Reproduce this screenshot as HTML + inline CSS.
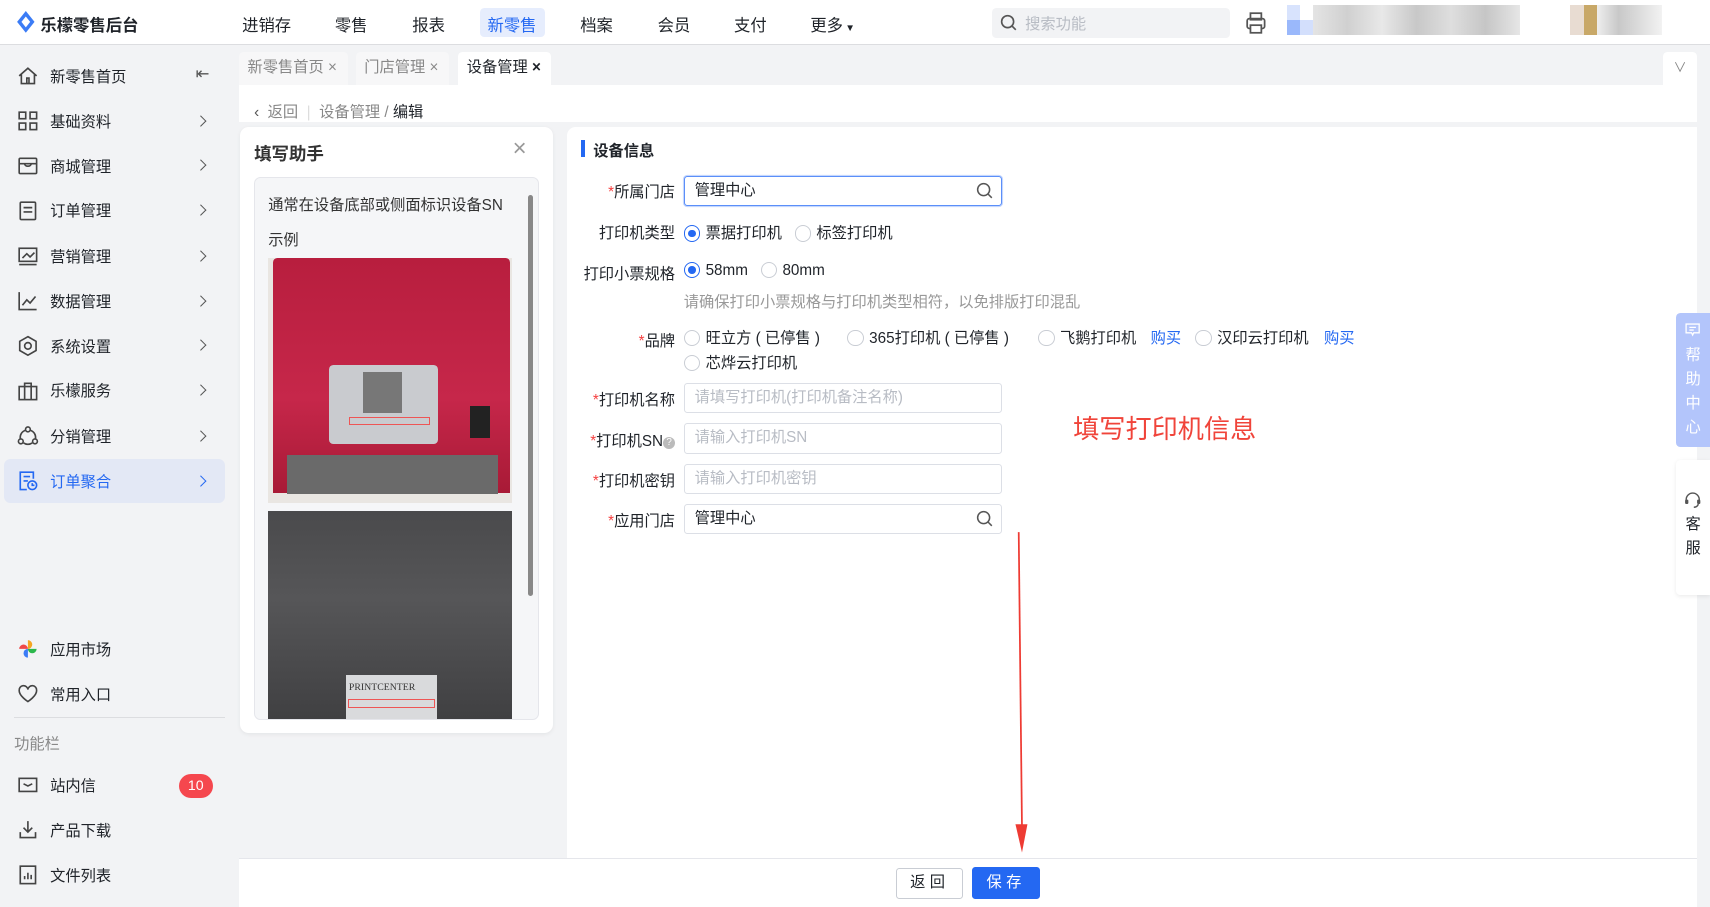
<!DOCTYPE html>
<html><head><meta charset="utf-8"><style>
*{box-sizing:border-box;margin:0;padding:0}
html,body{width:1710px;height:907px;overflow:hidden;background:#f2f3f5}
#w{zoom:1.0906;width:1568px;height:832px;position:relative;font-family:"Liberation Sans","Noto Sans CJK SC",sans-serif;font-size:14px;color:#1f2329;background:#f2f3f5}
.a{position:absolute}
.hdr{left:0;top:0;width:1568px;height:41px;background:#fff;border-bottom:1px solid #dcdde0}
.nav{top:11px;font-size:15px;color:#1f2329}
.mi{left:16px;width:190px;height:40px;display:flex;align-items:center;font-size:14px;color:#1f2329;border-radius:6px}
.mi svg{width:20px;height:20px;margin-right:10px;flex:none}
.mi .ch{position:absolute;right:18px;top:16px;width:7px;height:7px;border-right:1.5px solid #555;border-top:1.5px solid #555;transform:rotate(45deg)}
.tab{top:48px;height:30px;background:#f7f7f8;border-radius:4px 4px 0 0;color:#888;font-size:14px;line-height:30px;padding-left:8px}
.lbl{width:100px;text-align:right;left:519px;font-size:14px}
.lbl i{color:#f53f3f;font-style:normal}
.inp{left:627px;width:292px;height:28px;border:1px solid #dcdfe6;border-radius:3px;background:#fff;padding-left:9px;line-height:26px;font-size:14px}
.ph{color:#b8bcc4}
.rd{display:inline-block;width:15px;height:15px;border:1px solid #c9cdd4;border-radius:50%;vertical-align:-3px;margin-right:5px;background:#fff;position:relative}
.rd.on{border-color:#2468f2}
.rd.on:after{content:"";position:absolute;left:3px;top:3px;width:7px;height:7px;border-radius:50%;background:#2468f2}
.row{left:627px;font-size:14px;white-space:nowrap}
.blue{color:#2468f2}
</style></head><body><div id="w">

<div class="a hdr"></div>
<svg class="a" style="left:15px;top:10px" width="18" height="20" viewBox="0 0 18 20"><path d="M9 0 L17 10 L9 20 L1 10Z" fill="#3b7cf6"/><path d="M9 5 L13 10 L9 15 L5 10Z" fill="#fff"/></svg>
<div class="a" style="left:37px;top:11px;font-size:15px;font-weight:bold;color:#1f2329">乐檬零售后台</div>
<div class="a nav" style="left:222px">进销存</div>
<div class="a nav" style="left:307px">零售</div>
<div class="a nav" style="left:378px">报表</div>
<div class="a" style="left:440px;top:7px;width:60px;height:27px;background:#e6edfd;border-radius:4px"></div>
<div class="a nav" style="left:447px;color:#2468f2">新零售</div>
<div class="a nav" style="left:532px">档案</div>
<div class="a nav" style="left:603px">会员</div>
<div class="a nav" style="left:673px">支付</div>
<div class="a nav" style="left:743px">更多<span style="font-size:9px;margin-left:2px">▼</span></div>
<div class="a" style="left:910px;top:7px;width:218px;height:28px;background:#f2f3f5;border-radius:4px"></div>
<svg class="a" style="left:917px;top:13px" width="16" height="16" viewBox="0 0 16 16"><circle cx="7" cy="7" r="5.5" fill="none" stroke="#555" stroke-width="1.5"/><path d="M11 11l3.5 3.5" stroke="#555" stroke-width="1.5"/></svg>
<div class="a" style="left:940px;top:11px;color:#b8bcc4;font-size:14px">搜索功能</div>
<svg class="a" style="left:1142px;top:10px" width="20" height="22" viewBox="0 0 20 22"><rect x="5" y="2" width="10" height="6" fill="none" stroke="#555" stroke-width="1.6"/><rect x="2" y="7" width="16" height="9" rx="2" fill="none" stroke="#555" stroke-width="1.6"/><rect x="5" y="13" width="10" height="7" fill="#fff" stroke="#555" stroke-width="1.6"/></svg>
<div class="a" style="left:1180px;top:5px;width:12px;height:13px;background:#d8e3fd"></div>
<div class="a" style="left:1180px;top:18px;width:12px;height:14px;background:#9ab8fb"></div>
<div class="a" style="left:1192px;top:18px;width:12px;height:14px;background:#d3dffc"></div>
<div class="a" style="left:1204px;top:5px;width:190px;height:27px;background:linear-gradient(90deg,#e4e4e4,#d0d0d0,#e8e8e8,#c8c8c8,#dedede,#c6c6c6,#e6e6e6)"></div>
<div class="a" style="left:1440px;top:5px;width:12px;height:27px;background:#e8dcd2"></div>
<div class="a" style="left:1452px;top:5px;width:12px;height:27px;background:#c8a868"></div>
<div class="a" style="left:1464px;top:5px;width:60px;height:27px;background:linear-gradient(90deg,#eee,#c8c8c8,#ddd,#f2f2f2)"></div>

<!-- sidebar -->
<div class="a" style="left:4px;top:421px;width:202px;height:40px;background:#e3e8f5;border-radius:6px"></div>
<div class="a mi" style="top:50px"><svg viewBox="0 0 20 20"><path d="M2 10L10 3l8 7M4 8.5V17h12V8.5M9 17v-5h2v5" fill="none" stroke="#444" stroke-width="1.5"/></svg>新零售首页<span class="a" style="right:14px;top:9px;font-size:15px;color:#555">⇤</span></div>
<div class="a mi" style="top:91px"><svg viewBox="0 0 20 20"><g fill="none" stroke="#444" stroke-width="1.5"><rect x="2" y="2" width="6" height="6"/><rect x="12" y="2" width="6" height="6"/><rect x="2" y="12" width="6" height="6"/><rect x="12" y="12" width="6" height="6"/></g></svg>基础资料<span class="ch"></span></div>
<div class="a mi" style="top:132px"><svg viewBox="0 0 20 20"><g fill="none" stroke="#444" stroke-width="1.5"><rect x="2" y="3" width="16" height="14" rx="1"/><path d="M2 8h16M7 8c0 3 6 3 6 0"/></g></svg>商城管理<span class="ch"></span></div>
<div class="a mi" style="top:173px"><svg viewBox="0 0 20 20"><g fill="none" stroke="#444" stroke-width="1.5"><rect x="3" y="2" width="14" height="16" rx="1"/><path d="M6 7h8M6 11h8"/></g></svg>订单管理<span class="ch"></span></div>
<div class="a mi" style="top:215px"><svg viewBox="0 0 20 20"><g fill="none" stroke="#444" stroke-width="1.5"><rect x="2" y="3" width="16" height="12"/><path d="M5 12l4-4 3 3 4-4M2 18h16"/></g></svg>营销管理<span class="ch"></span></div>
<div class="a mi" style="top:256px"><svg viewBox="0 0 20 20"><g fill="none" stroke="#444" stroke-width="1.5"><path d="M2 2v16h16M5 14l4-5 3 3 5-6"/></g></svg>数据管理<span class="ch"></span></div>
<div class="a mi" style="top:297px"><svg viewBox="0 0 20 20"><g fill="none" stroke="#444" stroke-width="1.5"><path d="M10 1.5l7.5 4.3v8.4L10 18.5l-7.5-4.3V5.8z"/><circle cx="10" cy="10" r="3"/></g></svg>系统设置<span class="ch"></span></div>
<div class="a mi" style="top:338px"><svg viewBox="0 0 20 20"><g fill="none" stroke="#444" stroke-width="1.5"><rect x="2" y="6" width="16" height="12"/><path d="M7 6V3h6v3M7 6v12M13 6v12"/></g></svg>乐檬服务<span class="ch"></span></div>
<div class="a mi" style="top:380px"><svg viewBox="0 0 20 20"><g fill="none" stroke="#444" stroke-width="1.5"><circle cx="10" cy="4" r="2.2"/><circle cx="3.5" cy="15" r="2.2"/><circle cx="16.5" cy="15" r="2.2"/><path d="M7.8 4.8A7 7 0 0 0 3 12.5M12.2 4.8A7 7 0 0 1 17 12.5M6 16.5a7 7 0 0 0 8 0"/></g></svg>分销管理<span class="ch"></span></div>
<div class="a mi" style="top:421px;color:#2468f2"><svg viewBox="0 0 20 20"><g fill="none" stroke="#2468f2" stroke-width="1.5"><path d="M15 8V2H3v16h6M6 6h6M6 10h4"/><circle cx="14" cy="14" r="4"/><path d="M14 12v2h2"/></g></svg>订单聚合<span class="ch" style="border-color:#2468f2"></span></div>

<div class="a mi" style="top:575px"><svg viewBox="0 0 20 20"><path d="M10 10V2a4 4 0 0 1 0 8z" fill="#f5a623"/><path d="M10 10h8a4 4 0 0 1-8 0z" fill="#2db84d"/><path d="M10 10v8a4 4 0 0 1 0-8z" fill="#3b7cf6"/><path d="M10 10H2a4 4 0 0 1 8 0z" fill="#f04848"/></svg>应用市场</div>
<div class="a mi" style="top:616px"><svg viewBox="0 0 20 20"><path d="M10 17S2 12 2 7a4 4 0 0 1 8-1 4 4 0 0 1 8 1c0 5-8 10-8 10z" fill="none" stroke="#444" stroke-width="1.5"/></svg>常用入口</div>
<div class="a" style="left:13px;top:657px;width:193px;height:1px;background:#dcdde0"></div>
<div class="a" style="left:13px;top:671px;color:#888;font-size:14px">功能栏</div>
<div class="a mi" style="top:700px"><svg viewBox="0 0 20 20"><g fill="none" stroke="#444" stroke-width="1.5"><rect x="2" y="4" width="16" height="12"/><path d="M6 9l4 2 4-2"/></g></svg>站内信</div>
<div class="a" style="left:164px;top:710px;width:31px;height:22px;border-radius:11px;background:#f5474e;color:#fff;font-size:13px;text-align:center;line-height:22px">10</div>
<div class="a mi" style="top:741px"><svg viewBox="0 0 20 20"><g fill="none" stroke="#444" stroke-width="1.5"><path d="M10 2v10M6 8l4 4 4-4M3 12v5h14v-5"/></g></svg>产品下载</div>
<div class="a mi" style="top:782px"><svg viewBox="0 0 20 20"><g fill="none" stroke="#444" stroke-width="1.5"><rect x="3" y="2" width="14" height="16"/><path d="M7 14v-3M10 14V8M13 14v-4"/></g></svg>文件列表</div>

<!-- tabs -->
<div class="a tab" style="left:219px;width:100px">新零售首页 ×</div>
<div class="a tab" style="left:326px;width:86px">门店管理 ×</div>
<div class="a tab" style="left:420px;width:85px;background:#fff;color:#1f2329">设备管理 <b>×</b></div>
<div class="a" style="left:1525px;top:48px;width:31px;height:30px;background:#fff;border-radius:4px 4px 0 0;color:#888;text-align:center;line-height:30px;font-size:12px">∨</div>

<div class="a" style="left:219px;top:78px;width:1337px;height:754px;background:#fff"></div>
<div class="a" style="left:219px;top:112px;width:1337px;height:676px;background:#f2f3f5"></div>
<div class="a" style="left:233px;top:92px;font-size:14px;color:#888"><span style="color:#555">‹</span>&nbsp; 返回 &nbsp;<span style="color:#ddd">|</span>&nbsp; 设备管理 / <span style="color:#1f2329">编辑</span></div>

<!-- helper -->
<div class="a" style="left:220px;top:116px;width:287px;height:556px;background:#fff;border-radius:8px;box-shadow:0 1px 4px rgba(0,0,0,.06)"></div>
<div class="a" style="left:233px;top:129px;font-size:16px;font-weight:bold;color:#333">填写助手</div>
<div class="a" style="left:470px;top:126px;font-size:22px;color:#999;line-height:22px">×</div>
<div class="a" style="left:233px;top:162px;width:261px;height:498px;background:#f5f6f8;border:1px solid #e5e6eb;border-radius:6px;overflow:hidden">
 <div class="a" style="left:12px;top:14px;font-size:14px;color:#333">通常在设备底部或侧面标识设备SN</div>
 <div class="a" style="left:12px;top:46px;font-size:14px;color:#333">示例</div>
 <div class="a" style="left:12px;top:74px;width:224px;height:224px;background:#e9e6e2">
  <div class="a" style="left:4px;top:0;width:218px;height:215px;background:linear-gradient(180deg,#b81e3e,#c6274a 60%,#a81a36);border-radius:4px 4px 0 0"></div>
  <div class="a" style="left:56px;top:98px;width:100px;height:72px;background:#c9cbcf;border-radius:4px"></div>
  <div class="a" style="left:87px;top:104px;width:36px;height:38px;background:#777"></div>
  <div class="a" style="left:74px;top:145px;width:74px;height:8px;border:1px solid #e55"></div>
  <div class="a" style="left:17px;top:180px;width:194px;height:36px;background:#6a6a6a"></div>
  <div class="a" style="left:185px;top:135px;width:18px;height:30px;background:#222"></div>
 </div>
 <div class="a" style="left:12px;top:306px;width:224px;height:200px;background:linear-gradient(180deg,#4a4a4c,#565658 40%,#3e3e40)">
  <div class="a" style="left:71px;top:150px;width:84px;height:40px;background:#d9dadc"></div>
  <div class="a" style="left:73px;top:172px;width:80px;height:8px;border:1px solid #e55"></div>
  <div class="a" style="left:74px;top:156px;font-size:9px;font-family:'Liberation Serif',serif;color:#333">PRINTCENTER</div>
 </div>
 <div class="a" style="left:250px;top:16px;width:5px;height:368px;background:#888;border-radius:3px"></div>
</div>

<!-- form -->
<div class="a" style="left:520px;top:116px;width:1036px;height:671px;background:#fff;border-radius:8px 0 0 0"></div>
<div class="a" style="left:533px;top:128px;width:3px;height:16px;background:#2468f2"></div>
<div class="a" style="left:544px;top:127px;font-weight:bold;font-size:14px">设备信息</div>

<div class="a lbl" style="top:165px"><i>*</i>所属门店</div>
<div class="a inp" style="top:161px;border-color:#5b8ff9;box-shadow:0 0 0 1px #c5d7fd">管理中心</div>
<svg class="a" style="left:895px;top:167px" width="16" height="16" viewBox="0 0 16 16"><circle cx="7" cy="7" r="5.5" fill="none" stroke="#555" stroke-width="1.4"/><path d="M11 11l3.5 3.5" stroke="#555" stroke-width="1.4"/></svg>

<div class="a lbl" style="top:203px">打印机类型</div>
<div class="a row" style="top:203px"><span class="rd on"></span>票据打印机 &nbsp;&nbsp;<span class="rd"></span>标签打印机</div>
<div class="a lbl" style="top:240px">打印小票规格</div>
<div class="a row" style="top:240px"><span class="rd on"></span>58mm &nbsp;&nbsp;<span class="rd"></span>80mm</div>
<div class="a row" style="top:266px;color:#999">请确保打印小票规格与打印机类型相符，以免排版打印混乱</div>
<div class="a lbl" style="top:302px"><i>*</i>品牌</div>
<div class="a row" style="top:299px;left:627px"><span class="rd"></span>旺立方 ( 已停售 )</div>
<div class="a row" style="top:299px;left:777px"><span class="rd"></span>365打印机 ( 已停售 )</div>
<div class="a row" style="top:299px;left:952px"><span class="rd"></span>飞鹅打印机</div>
<div class="a row blue" style="top:299px;left:1055px">购买</div>
<div class="a row" style="top:299px;left:1096px"><span class="rd"></span>汉印云打印机</div>
<div class="a row blue" style="top:299px;left:1214px">购买</div>
<div class="a row" style="top:322px"><span class="rd"></span>芯烨云打印机</div>

<div class="a lbl" style="top:356px"><i>*</i>打印机名称</div>
<div class="a inp ph" style="top:351px">请填写打印机(打印机备注名称)</div>
<div class="a lbl" style="top:393px"><i>*</i>打印机SN<span style="display:inline-block;width:11px;height:11px;border-radius:50%;background:#bbb;color:#fff;font-size:9px;line-height:11px;text-align:center;vertical-align:1px">?</span></div>
<div class="a inp ph" style="top:388px">请输入打印机SN</div>
<div class="a lbl" style="top:430px"><i>*</i>打印机密钥</div>
<div class="a inp ph" style="top:425px">请输入打印机密钥</div>
<div class="a lbl" style="top:467px"><i>*</i>应用门店</div>
<div class="a inp" style="top:462px">管理中心</div>
<svg class="a" style="left:895px;top:468px" width="16" height="16" viewBox="0 0 16 16"><circle cx="7" cy="7" r="5.5" fill="none" stroke="#555" stroke-width="1.4"/><path d="M11 11l3.5 3.5" stroke="#555" stroke-width="1.4"/></svg>

<div class="a" style="left:984px;top:374px;font-size:24px;color:#f0443a">填写打印机信息</div>
<svg class="a" style="left:926px;top:488px" width="20" height="296" viewBox="0 0 20 296"><path d="M8 0 L11 272" stroke="#ee3b33" stroke-width="1.6"/><path d="M5 268 L16 268 L11 294Z" fill="#ee3b33"/></svg>

<!-- footer -->
<div class="a" style="left:219px;top:787px;width:1337px;height:1px;background:#e5e6eb"></div>
<div class="a" style="left:822px;top:796px;width:61px;height:28px;border:1px solid #c9cdd4;border-radius:3px;text-align:center;line-height:26px;font-size:14px;letter-spacing:4px">返回</div>
<div class="a" style="left:891px;top:795px;width:63px;height:29px;background:#2468f2;border-radius:3px;text-align:center;line-height:29px;font-size:14px;color:#fff;letter-spacing:4px">保存</div>

<!-- right float -->
<div class="a" style="left:1556px;top:41px;width:12px;height:791px;background:#f2f3f5"></div>
<div class="a" style="left:1537px;top:287px;width:31px;height:123px;background:#b3c5fb;border-radius:4px 0 0 4px;color:#fff;font-size:14px;text-align:center;line-height:22px;padding-top:28px">帮<br>助<br>中<br>心</div>
<svg class="a" style="left:1545px;top:296px" width="14" height="13" viewBox="0 0 14 13"><path d="M1 1h12v8H8l-1 2-1-2H1z M4 4h6M4 6.5h4" fill="none" stroke="#fff" stroke-width="1.2"/></svg>
<div class="a" style="left:1537px;top:422px;width:31px;height:124px;background:#fff;border-radius:4px 0 0 4px;box-shadow:0 1px 4px rgba(0,0,0,.08);font-size:14px;text-align:center;line-height:22px;padding-top:48px">客<br>服</div>
<svg class="a" style="left:1544px;top:451px" width="16" height="16" viewBox="0 0 16 16"><path d="M2 9V7a6 6 0 0 1 12 0v2M9 14c3 0 4-2 4-3" fill="none" stroke="#555" stroke-width="1.3"/><rect x="1" y="7" width="3" height="4" rx="1" fill="#555"/><rect x="12" y="7" width="3" height="4" rx="1" fill="#555"/></svg>
</div></body></html>
